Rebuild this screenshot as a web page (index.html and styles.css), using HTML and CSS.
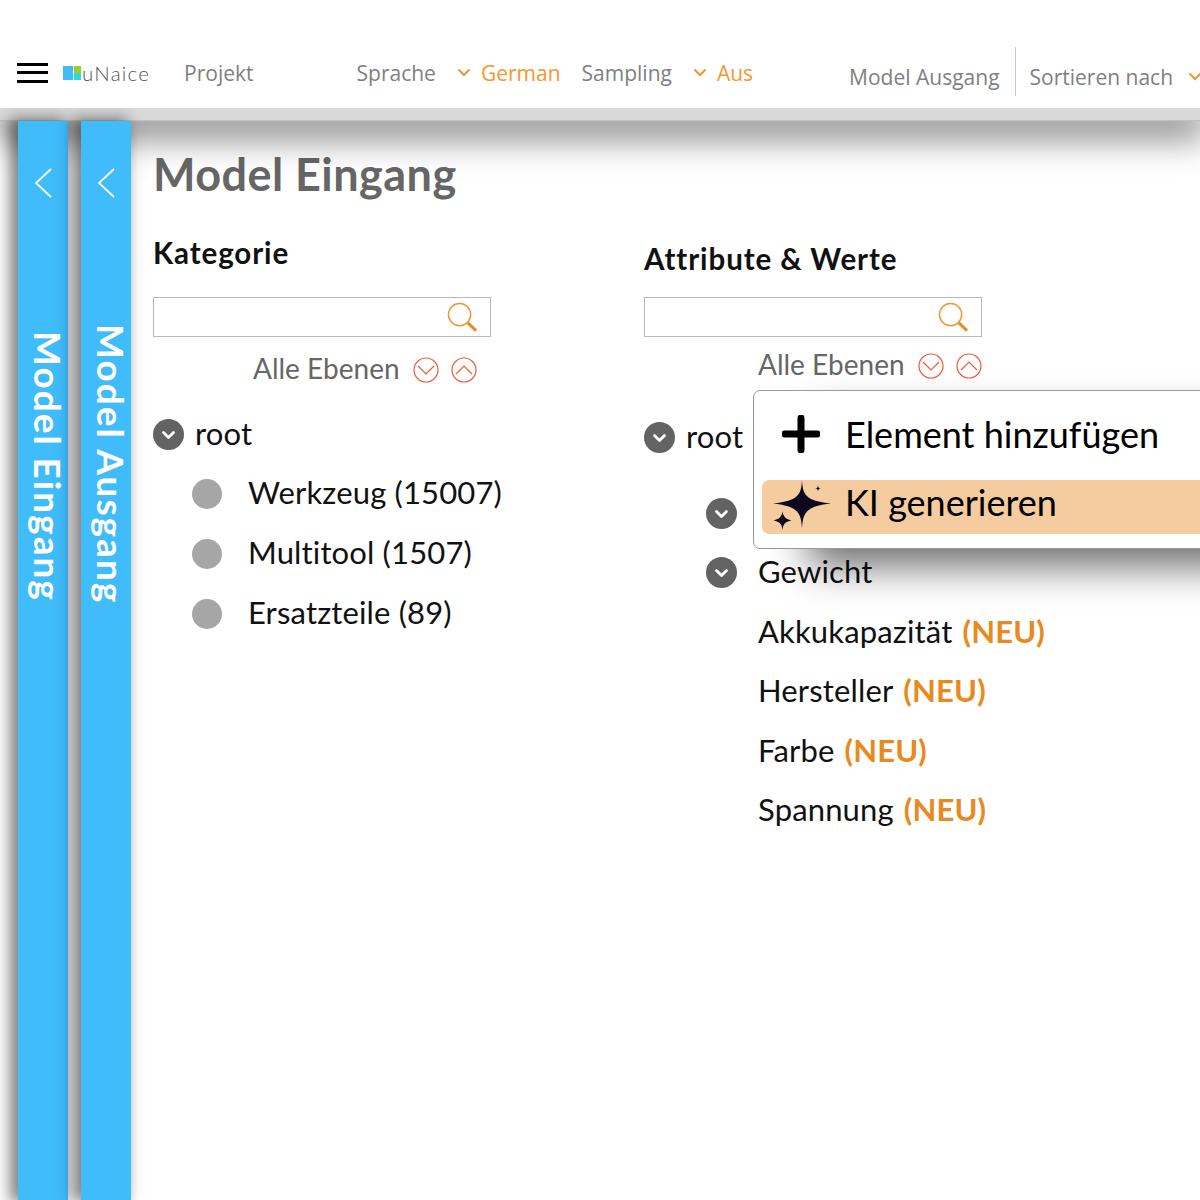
FILE: index.html
```html
<!DOCTYPE html>
<html lang="de">
<head>
<meta charset="utf-8">
<title>uNaice</title>
<link rel="stylesheet" href="styles.css">
</head>
<body>
<div class="app">
  <header class="topbar">
    <div class="burger"><span></span><span></span><span></span></div>
    <div class="logo">
      <div class="logo-mark"><i class="lm-blue"></i><i class="lm-green"></i><i class="lm-cyan"></i></div>
      <span class="logo-text">uNaice</span>
    </div>
    <span class="nav nav-projekt">Projekt</span>
    <span class="nav nav-sprache">Sprache</span>
    <svg class="nav-chev chev-a" viewBox="0 0 14 9"><path d="M1.500 1.500 7 7l5.500-5.500"/></svg>
    <span class="nav accent">German</span>
    <span class="nav nav-sampling">Sampling</span>
    <svg class="nav-chev chev-b" viewBox="0 0 14 9"><path d="M1.500 1.500 7 7l5.500-5.500"/></svg>
    <span class="nav accent">Aus</span>
    <span class="nav low nav-model">Model Ausgang</span>
    <span class="divider"></span>
    <span class="nav low nav-sort">Sortieren nach</span>
    <svg class="nav-chev chev-c" viewBox="0 0 14 9"><path d="M1.500 1.500 7 7l5.500-5.500"/></svg>
  </header>
  <div class="strip"></div>
  <div class="main">
    <aside class="panel panel-first">
      <svg class="panel-chev" viewBox="0 0 18 30"><path d="M17 1 2 15l15 14"/></svg>
      <span class="panel-label label-first">Model Eingang</span>
    </aside>
    <aside class="panel panel-second">
      <svg class="panel-chev" viewBox="0 0 18 30"><path d="M17 1 2 15l15 14"/></svg>
      <span class="panel-label label-second">Model Ausgang</span>
    </aside>
    <section class="content">
      <h1 class="title">Model Eingang</h1>
      <div class="columns">
        <div class="col col-left">
          <h2 class="heading heading-left">Kategorie</h2>
          <div class="search">
            <svg class="search-icon" viewBox="0 0 32 32"><circle cx="13" cy="13" r="11.500"/><path class="handle" d="m21.500 21.500 8.500 8"/></svg>
          </div>
          <div class="levels levels-left">
            <span class="levels-text">Alle Ebenen</span>
            <svg class="round" viewBox="0 0 26 26"><circle cx="13" cy="13" r="12"/><path d="m5 9 8 8 8-8"/></svg>
            <svg class="round" viewBox="0 0 26 26"><circle cx="13" cy="13" r="12"/><path d="m5 17 8-8 8 8"/></svg>
          </div>
          <div class="row row-root row-root-left">
            <svg class="toggle" viewBox="0 0 31 31"><circle cx="15.500" cy="15.500" r="15.500"/><path d="m10.500 13.500 5 5 5-5"/></svg>
            <span class="label">root</span>
          </div>
          <div class="row row-leaf"><span class="dot"></span><span class="label">Werkzeug (15007)</span></div>
          <div class="row row-leaf"><span class="dot"></span><span class="label">Multitool (1507)</span></div>
          <div class="row row-leaf"><span class="dot"></span><span class="label">Ersatzteile (89)</span></div>
        </div>
        <div class="col col-right">
          <h2 class="heading heading-right">Attribute &amp; Werte</h2>
          <div class="search">
            <svg class="search-icon" viewBox="0 0 32 32"><circle cx="13" cy="13" r="11.500"/><path class="handle" d="m21.500 21.500 8.500 8"/></svg>
          </div>
          <div class="levels levels-right">
            <span class="levels-text">Alle Ebenen</span>
            <svg class="round" viewBox="0 0 26 26"><circle cx="13" cy="13" r="12"/><path d="m5 9 8 8 8-8"/></svg>
            <svg class="round" viewBox="0 0 26 26"><circle cx="13" cy="13" r="12"/><path d="m5 17 8-8 8 8"/></svg>
          </div>
          <div class="row row-root row-root-right">
            <svg class="toggle" viewBox="0 0 31 31"><circle cx="15.500" cy="15.500" r="15.500"/><path d="m10.500 13.500 5 5 5-5"/></svg>
            <span class="label">root</span>
          </div>
          <div class="row row-branch row-first-branch">
            <svg class="toggle" viewBox="0 0 31 31"><circle cx="15.500" cy="15.500" r="15.500"/><path d="m10.500 13.500 5 5 5-5"/></svg>
          </div>
          <div class="row row-branch">
            <svg class="toggle" viewBox="0 0 31 31"><circle cx="15.500" cy="15.500" r="15.500"/><path d="m10.500 13.500 5 5 5-5"/></svg>
            <span class="label">Gewicht</span>
          </div>
          <div class="row row-attr"><span class="label">Akkukapazität</span><b class="new">(NEU)</b></div>
          <div class="row row-attr"><span class="label">Hersteller</span><b class="new">(NEU)</b></div>
          <div class="row row-attr"><span class="label">Farbe</span><b class="new">(NEU)</b></div>
          <div class="row row-attr"><span class="label">Spannung</span><b class="new">(NEU)</b></div>
        </div>
      </div>
    </section>
  </div>
  <div class="menu">
    <div class="menu-item menu-add">
      <svg class="menu-plus" viewBox="0 0 38 38"><path d="M19 3v32M3 19h32"/></svg>
      <span>Element hinzufügen</span>
    </div>
    <div class="menu-item menu-active">
      <svg class="menu-spark" viewBox="0 0 60 50">
        <path d="M30 0C30.800 14 33 21 59 23.500 33 26 31 34 30 48 29 34 27 26 1 23.500 27 21 29.200 14 30 0z"/>
        <path d="M10.500 31c.6 5 2.500 8 9 9.500-6.500 1-8.400 4-9 9.500-.6-5.500-2.500-8.500-9-9.500 6.500-1.500 8.400-4.500 9-9.500z"/>
        <path d="M46 5.500c.3 2 .8 2.700 2.800 3-2 .3-2.500 1-2.800 3-.3-2-.8-2.700-2.800-3 2-.3 2.500-1 2.800-3z"/>
      </svg>
      <span>KI generieren</span>
    </div>
  </div>
</div>
</body>
</html>
```
FILE: styles.css
```css
* { box-sizing: border-box; }
html, body { margin: 0; padding: 0; background: #fff; }
body { width: 1200px; height: 1200px; overflow: hidden; font-family: "Lato", "Open Sans", sans-serif; }
.app { position: relative; width: 1200px; height: 1200px; overflow: hidden; display: flex; flex-direction: column; }

.topbar { position: relative; z-index: 3; height: 108px; flex: none; display: flex; align-items: center; padding: 37px 0 0 17px; background: #fff; font-family: "Open Sans", sans-serif; white-space: nowrap; }
.burger { width: 31px; height: 20px; display: flex; flex-direction: column; justify-content: space-between; flex: none; }
.burger span { height: 3px; background: #000; }
.logo { display: flex; align-items: center; margin-left: 15px; flex: none; }
.logo-mark { width: 18px; height: 14px; display: grid; grid-template-columns: 10px 7px; grid-template-rows: 7px 7px; column-gap: 1px; }
.lm-blue { grid-row: 1 / 3; background: #40bcfa; }
.lm-green { background: #9ecb2d; }
.lm-cyan { background: #2bdcd8; }
.logo-text { font-size: 20.500px; font-weight: 300; color: #555; margin-left: 1px; font-family: "Lato", sans-serif; letter-spacing: 1.200px; }
.nav { font-size: 21px; color: #808080; flex: none; }
.nav-projekt { margin-left: 34px; }
.nav-sprache { margin-left: 103px; }
.nav-sampling { margin-left: 21px; }
.nav-model { margin-left: 96px; }
.nav-sort { margin-left: 14px; }
.low { position: relative; top: 4px; }
.accent { color: #f7952f; margin-left: 10px; }
.nav-chev { width: 14px; height: 9px; fill: none; stroke: #f0962f; stroke-width: 2; flex: none; }
.chev-a { margin-left: 21px; }
.chev-b { margin-left: 21px; }
.chev-c { margin-left: 15px; position: relative; top: 4px; }
.divider { width: 1px; height: 49px; background: #c8c8c8; margin-left: 15px; position: relative; top: -1px; flex: none; }

.strip { height: 13px; flex: none; background: #d9d9d9; position: relative; z-index: 1; border-bottom: 1px solid #c0c0c0; box-shadow: 0 8px 36px 6px rgba(0,0,0,.62); }

.main { flex: 1; display: flex; padding-left: 18px; min-height: 0; }
.panel { position: relative; z-index: 2; width: 50px; flex: none; background: #40bcfa; display: flex; flex-direction: column; align-items: flex-start; box-shadow: -6px 0 14px 2px rgba(0,0,0,.5); }
.panel-second { margin-left: 13px; }
.panel-chev { width: 18px; height: 30px; margin: 47px 0 0 16px; fill: none; stroke: #fff; stroke-width: 1.800; flex: none; }
.panel-label { writing-mode: vertical-rl; color: #fff; font-weight: 700; font-size: 37px; letter-spacing: 2px; white-space: nowrap; line-height: 60px; width: 60px; text-align: left; }
.label-first { margin-top: 133px; }
.label-second { margin-top: 126px; }

.content { flex: 1; padding: 26px 0 0 22px; min-width: 0; }
.title { margin: 0; font-size: 45px; letter-spacing: .45px; font-weight: 700; color: #666; line-height: 54px; }
.columns { display: flex; padding-top: 1px; }
.col { flex: none; }
.col-left { width: 491px; }
.col-right { width: 530px; }
.heading { margin: 0; font-size: 29.500px; letter-spacing: .9px; font-weight: 700; color: #111; line-height: 36px; }
.heading-left { padding-top: 33px; height: 95px; }
.heading-right { padding-top: 39px; height: 95px; }
.search { width: 338px; height: 40px; border: 1px solid #b8b8b8; display: flex; align-items: center; justify-content: flex-end; padding-right: 12px; }
.search-icon { width: 31px; height: 31px; fill: none; stroke: #f0962f; stroke-width: 1.500; }
.handle { stroke-width: 3; stroke: #e88a20; }
.levels { display: flex; align-items: center; height: 30px; white-space: nowrap; }
.levels-left { margin-top: 18px; padding-left: 100px; }
.levels-right { margin-top: 14px; padding-left: 114px; }
.levels-text { font-size: 28px; color: #666; margin-right: 13px; padding-bottom: 5px; }
.round { width: 26px; height: 26px; fill: none; stroke: #f2593a; stroke-width: 1.200; flex: none; margin-right: 12px; }

.row { display: flex; align-items: center; height: 59.600px; white-space: nowrap; font-size: 31px; letter-spacing: .15px; color: #111; }
.label { padding-bottom: 4px; }
.row-root-left { margin-top: 20px; }
.row-root-right { margin-top: 27px; }
.toggle { width: 31px; height: 31px; flex: none; }
.toggle circle { fill: #636363; }
.toggle path { fill: none; stroke: #fff; stroke-width: 2.800; stroke-linecap: round; stroke-linejoin: round; }
.row-root .label { margin-left: 11px; }
.row-leaf { padding-left: 39px; }
.dot { width: 30px; height: 30px; border-radius: 50%; background: #a6a6a6; flex: none; }
.row-leaf .label { margin-left: 26px; }
.row-branch { padding-left: 62px; }
.row-first-branch { margin-top: 16px; }
.row-branch .label { margin-left: 21px; }
.row-attr { padding-left: 114px; }
.new { color: #e88a20; font-weight: 700; margin-left: 10px; padding-bottom: 4px; }

.menu { position: absolute; left: 753px; top: 390px; width: 480px; height: 159px; z-index: 5; background: #fff; border: 1px solid #999; border-radius: 7px; padding: 16px 8px 0; box-shadow: 50px 22px 40px -6px rgba(0,0,0,.6); }
.menu-item { display: flex; align-items: center; height: 54px; font-size: 36px; color: #000; white-space: nowrap; padding-left: 20px; }
.menu-item span { margin-left: 25px; }
.menu-plus { width: 38px; height: 38px; fill: none; stroke: #000; stroke-width: 7; stroke-linecap: round; flex: none; }
.menu-active { margin-top: 19px; background: #f5cca0; border-radius: 7px; padding-left: 10px; }
.menu-spark { width: 60px; height: 50px; fill: #0d0820; flex: none; margin-top: -4px; }
.menu-active span { margin-left: 13px; padding-bottom: 10px; }
```
